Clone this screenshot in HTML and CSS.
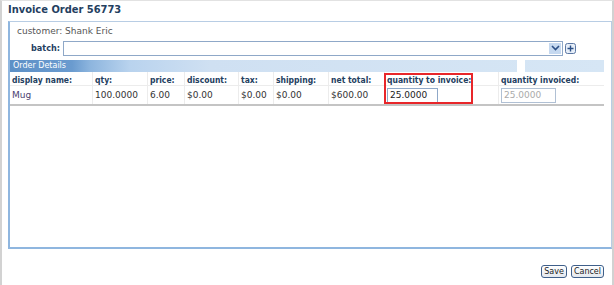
FILE: index.html
```html
<!DOCTYPE html>
<html lang="en">
<head>
    <meta charset="UTF-8">
    <title>Invoice Order 56773</title>
    <link rel="stylesheet" href="styles.css">
</head>
<body>
    <div class="window">
        <h1 class="title">Invoice Order 56773</h1>
        <div class="panel">
            <div class="customer">customer: Shank Eric</div>
            <div class="batch-row">
                <label for="batch">batch:</label>
                <div class="select">
                    <span class="select-btn">
                        <svg width="9" height="6" viewBox="0 0 9 6"><path d="M1 1 L4.5 4.5 L8 1" fill="none" stroke="#2b4f86" stroke-width="1.6"/></svg>
                    </span>
                </div>
                <span class="add-btn">
                    <svg width="11" height="11" viewBox="0 0 11 11"><rect x="0.5" y="0.5" width="10" height="10" rx="2" fill="#e6eef8" stroke="#5b77a3"/><path d="M5.5 2.5 V8.5 M2.5 5.5 H8.5" stroke="#2b4f86" stroke-width="1.4"/></svg>
                </span>
            </div>
            <div class="grid">
                <div class="grid-head">Order Details<span class="notch"></span></div>
                <table>
                    <tr class="head-row">
                        <th class="c1">display name:</th>
                        <th class="c2">qty:</th>
                        <th class="c3">price:</th>
                        <th class="c4">discount:</th>
                        <th class="c5">tax:</th>
                        <th class="c6">shipping:</th>
                        <th class="c7">net total:</th>
                        <th class="c8">quantity to invoice:</th>
                        <th class="c9">quantity invoiced:</th>
                    </tr>
                    <tr class="data-row">
                        <td class="name">Mug</td>
                        <td>100.0000</td>
                        <td>6.00</td>
                        <td>$0.00</td>
                        <td>$0.00</td>
                        <td>$0.00</td>
                        <td>$600.00</td>
                        <td><input class="qty" type="text" value="25.0000"></td>
                        <td><input class="qty" type="text" value="25.0000" disabled></td>
                    </tr>
                </table>
                <div class="highlight"></div>
            </div>
        </div>
        <div class="actions">
            <button>Save</button>
            <button>Cancel</button>
        </div>
    </div>
</body>
</html>
```

FILE: styles.css
```css
body {
    margin: 0;
    background-color: white;
    font-family: "DejaVu Sans", Verdana, sans-serif;
}
.window {
    width: 614px;
    height: 285px;
    border-left: 2px solid #d2d2d2;
    border-right: 2px solid #d2d2d2;
    border-top: 1px solid #e2e2e2;
    box-sizing: border-box;
}
.title {
    margin: 0;
    padding: 2px 0 0 6px;
    height: 18px;
    font-family: "DejaVu Sans Condensed", "DejaVu Sans", sans-serif;
    font-size: 11px;
    font-weight: bold;
    color: #24405f;
}
.panel {
    margin-left: 6px;
    width: 604px;
    height: 228px;
    box-sizing: border-box;
    border: 1px solid #b8cde4;
    border-left: 2px solid #8fb6df;
    border-bottom: 2px solid #8fb6df;
    padding-top: 4px;
}
.customer {
    font-size: 9px;
    color: #555;
    padding-left: 7px;
    height: 14px;
}
.batch-row {
    display: flex;
    align-items: center;
    height: 16px;
}
.batch-row label {
    width: 50px;
    text-align: right;
    font-family: "DejaVu Sans Condensed", "DejaVu Sans", sans-serif;
    font-size: 9px;
    font-weight: bold;
    color: #24405f;
    padding-right: 3px;
}
.select {
    width: 497px;
    height: 13px;
    border: 1px solid #8fa8c8;
    display: flex;
    justify-content: flex-end;
    align-items: center;
    padding-right: 1px;
}
.select-btn {
    width: 12px;
    height: 11px;
    background-color: #c6d9f0;
    display: flex;
    align-items: center;
    justify-content: center;
}
.add-btn {
    margin-left: 2px;
    height: 11px;
    display: flex;
}
.grid {
    position: relative;
    margin-top: 4px;
    width: 594px;
}
.grid-head {
    position: relative;
    height: 12px;
    line-height: 12px;
    font-size: 8px;
    color: white;
    padding-left: 3px;
    background: linear-gradient(to right, #5d90c6 0, #6a9bcf 62px, #8db5de 80px, #b9d3ee 120px, #cfe0f2 200px, #d6e6f5 100%);
}
.notch {
    position: absolute;
    left: 507px;
    top: 0;
    width: 8px;
    height: 12px;
    background-color: white;
}
table {
    width: 100%;
    border-collapse: collapse;
    font-size: 9px;
}
th, td {
    text-align: left;
    padding: 0 0 0 2px;
    border-left: 1px solid #ececec;
    white-space: nowrap;
}
th:first-child, td:first-child {
    border-left: none;
}
.head-row th {
    height: 10px;
    padding-top: 3px;
    font-family: "DejaVu Sans Condensed", "DejaVu Sans", sans-serif;
    font-size: 8.5px;
    color: #24405f;
    border-bottom: 1px solid #ececec;
}
.data-row td {
    height: 18px;
    color: #333;
    border-bottom: 2px solid #c4c4c4;
}
.data-row td.name {
    color: #4b3f72;
}
.c1 { width: 80px; }
.c2 { width: 52px; }
.c3 { width: 34px; }
.c4 { width: 51px; }
.c5 { width: 32px; }
.c6 { width: 52px; }
.c7 { width: 53px; }
.c8 { width: 111px; }
input.qty {
    width: 51px;
    height: 15px;
    box-sizing: border-box;
    border: 1px solid #8fa8c8;
    font-family: "DejaVu Sans", Verdana, sans-serif;
    font-size: 9px;
    padding: 0 2px;
    color: #222;
    background: white;
}
input.qty:disabled {
    color: #aaa;
    border-color: #b0c0d4;
    width: 55px;
}
.highlight {
    position: absolute;
    left: 374px;
    top: 13px;
    width: 85px;
    height: 27px;
    border: 2px solid #e8262a;
}
.actions {
    display: flex;
    justify-content: flex-end;
    gap: 4px;
    padding: 16px 8px 0 0;
}
.actions button {
    font-family: "DejaVu Sans", Verdana, sans-serif;
    font-size: 8px;
    height: 13px;
    padding: 0 2px;
    color: #222;
    border: 1px solid #3f5f8a;
    border-radius: 3px;
    background: linear-gradient(#ffffff, #e4e8ee);
}
```
